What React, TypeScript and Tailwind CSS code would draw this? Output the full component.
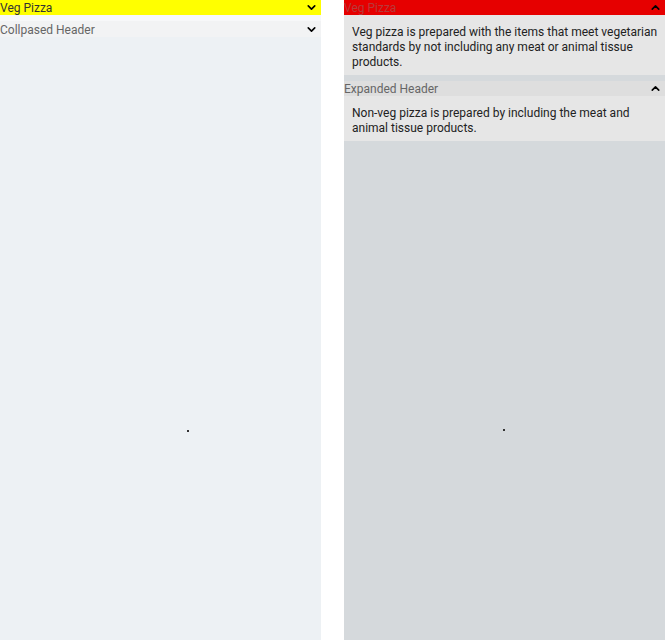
import { ChevronDown, ChevronUp } from "lucide-react";

export default function App() {
  return (
    <div className="flex h-[640px] w-[666px] bg-white font-['Roboto',sans-serif] text-[12px]">
      <div className="relative flex w-[321px] flex-col bg-[#edf1f4]">
        <div className="flex h-[15px] items-center justify-between bg-[#ffff00] pr-[3px] leading-[15px] text-[#333]">
          <span className="mt-[2px]">Veg Pizza</span>
          <ChevronDown className="h-[13px] w-[13px] text-black" strokeWidth={3} />
        </div>
        <div className="h-[6px] bg-[#f7f8f9]" />
        <div className="flex h-[16px] items-center justify-between bg-[#f2f3f4] pr-[3px] leading-[16px] text-[#666]">
          <span className="mt-[2px]">Collpased Header</span>
          <ChevronDown className="h-[13px] w-[13px] text-black" strokeWidth={3} />
        </div>
        <div className="absolute left-[187px] top-[430px] h-[2px] w-[2px] bg-[#333]" />
      </div>
      <div className="w-[23px]" />
      <div className="relative flex w-[321px] flex-col bg-[#d5d9dc]">
        <div className="flex h-[15px] items-center justify-between bg-[#e60000] pr-[3px] leading-[15px] text-[#b83a3a]">
          <span className="mt-[2px]">Veg Pizza</span>
          <ChevronUp className="h-[13px] w-[13px] text-black" strokeWidth={3} />
        </div>
        <div className="bg-[#e6e6e6] pb-[5px] pl-2 pr-[4px] pt-[10px] leading-[15px] text-[#222]">
          Veg pizza is prepared with the items that meet vegetarian standards by not including any meat or animal tissue products.
        </div>
        <div className="h-[6px]" />
        <div className="flex h-[15px] items-center justify-between bg-[#dedede] pr-[3px] leading-[15px] text-[#666]">
          <span className="mt-[2px]">Expanded Header</span>
          <ChevronUp className="h-[13px] w-[13px] text-black" strokeWidth={3} />
        </div>
        <div className="bg-[#e6e6e6] pb-[5px] pl-2 pr-[4px] pt-[10px] leading-[15px] text-[#222]">
          Non-veg pizza is prepared by including the meat and animal tissue products.
        </div>
        <div className="absolute left-[159px] top-[429px] h-[2px] w-[2px] bg-[#333]" />
      </div>
    </div>
  );
}
